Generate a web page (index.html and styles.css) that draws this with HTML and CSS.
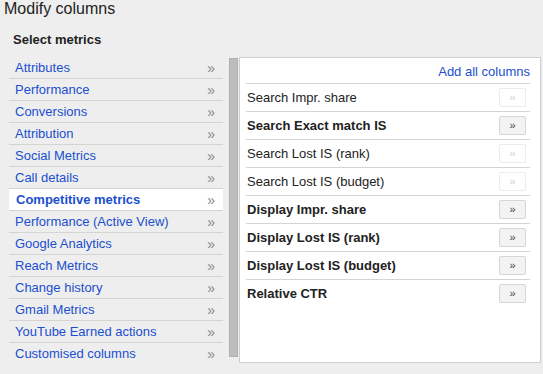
FILE: index.html
```html
<!DOCTYPE html>
<html lang="en">
<head>
  <meta charset="UTF-8">
  <title>Modify columns</title>
  <link rel="stylesheet" href="styles.css">
</head>
<body>
<h1 class="title">Modify columns</h1>
<div class="section-title">Select metrics</div>

<div class="picker">
  <ul class="categories">
    <li><span>Attributes</span><span class="arrow">»</span></li>
    <li><span>Performance</span><span class="arrow">»</span></li>
    <li><span>Conversions</span><span class="arrow">»</span></li>
    <li><span>Attribution</span><span class="arrow">»</span></li>
    <li><span>Social Metrics</span><span class="arrow">»</span></li>
    <li><span>Call details</span><span class="arrow">»</span></li>
    <li class="selected"><span>Competitive metrics</span><span class="arrow">»</span></li>
    <li><span>Performance (Active View)</span><span class="arrow">»</span></li>
    <li><span>Google Analytics</span><span class="arrow">»</span></li>
    <li><span>Reach Metrics</span><span class="arrow">»</span></li>
    <li><span>Change history</span><span class="arrow">»</span></li>
    <li><span>Gmail Metrics</span><span class="arrow">»</span></li>
    <li><span>YouTube Earned actions</span><span class="arrow">»</span></li>
    <li><span>Customised columns</span><span class="arrow">»</span></li>
  </ul>

  <div class="scrollbar"></div>

  <div class="panel">
    <div class="panel-head"><a href="#">Add all columns</a></div>
    <div class="metric"><span>Search Impr. share</span><button class="add" disabled>»</button></div>
    <div class="metric bold"><span>Search Exact match IS</span><button class="add">»</button></div>
    <div class="metric"><span>Search Lost IS (rank)</span><button class="add" disabled>»</button></div>
    <div class="metric"><span>Search Lost IS (budget)</span><button class="add" disabled>»</button></div>
    <div class="metric bold"><span>Display Impr. share</span><button class="add">»</button></div>
    <div class="metric bold"><span>Display Lost IS (rank)</span><button class="add">»</button></div>
    <div class="metric bold"><span>Display Lost IS (budget)</span><button class="add">»</button></div>
    <div class="metric bold"><span>Relative CTR</span><button class="add">»</button></div>
  </div>
</div>
</body>
</html>
```

FILE: styles.css
```css
body {
  margin: 0;
  background: #eeeeee;
  font-family: "Liberation Sans", Arial, sans-serif;
  font-size: 13px;
  color: #222;
}
.title {
  margin: 0;
  padding-left: 4px;
  font-size: 16px;
  font-weight: normal;
  line-height: 18px;
}
.section-title {
  margin-top: 14px;
  padding-left: 13px;
  font-weight: bold;
  line-height: 16px;
}
.picker {
  display: flex;
  align-items: flex-start;
  margin-top: 9px;
  padding-left: 9px;
}
.categories {
  list-style: none;
  margin: 0;
  padding: 0;
  width: 214px;
}
.categories li {
  display: flex;
  justify-content: space-between;
  height: 21px;
  line-height: 22px;
  padding: 0 8px 0 6px;
  border-bottom: 1px solid #d4d4d4;
  color: #1a4fd0;
}
.categories li:last-child {
  border-bottom: none;
}
.categories li.selected {
  background: #fff;
  font-weight: bold;
  padding-left: 7px;
}
.arrow {
  color: #888;
  font-weight: normal;
  font-size: 14px;
}
.scrollbar {
  width: 7px;
  height: 297px;
  margin: 1px 1px 0 6px;
  background: #bdbdbd;
  border: 1px solid #b0b0b0;
}
.panel {
  width: 284px;
  height: 304px;
  padding: 0 10px 0 6px;
  background: #fff;
  border: 1px solid #cfcfcf;
}
.panel-head {
  text-align: right;
  line-height: 16px;
  padding: 6px 0 3px;
  border-bottom: 1px solid #d4d4d4;
}
.panel-head a {
  color: #1a4fd0;
  text-decoration: none;
}
.metric {
  display: flex;
  justify-content: space-between;
  align-items: center;
  height: 27px;
  line-height: 28px;
  padding-left: 1px;
  border-bottom: 1px solid #d4d4d4;
}
.metric:last-child {
  border-bottom: none;
}
.metric.bold {
  font-weight: bold;
}
.add {
  width: 27px;
  height: 19px;
  margin-right: 4px;
  padding: 0;
  font-family: "Liberation Sans", Arial, sans-serif;
  font-size: 11px;
  line-height: 17px;
  color: #444;
  background: #f3f3f3;
  border: 1px solid #d6d6d6;
  border-radius: 2px;
}
.add:disabled {
  color: #cfcfcf;
  background: #fff;
  border-color: #ececec;
}
```
